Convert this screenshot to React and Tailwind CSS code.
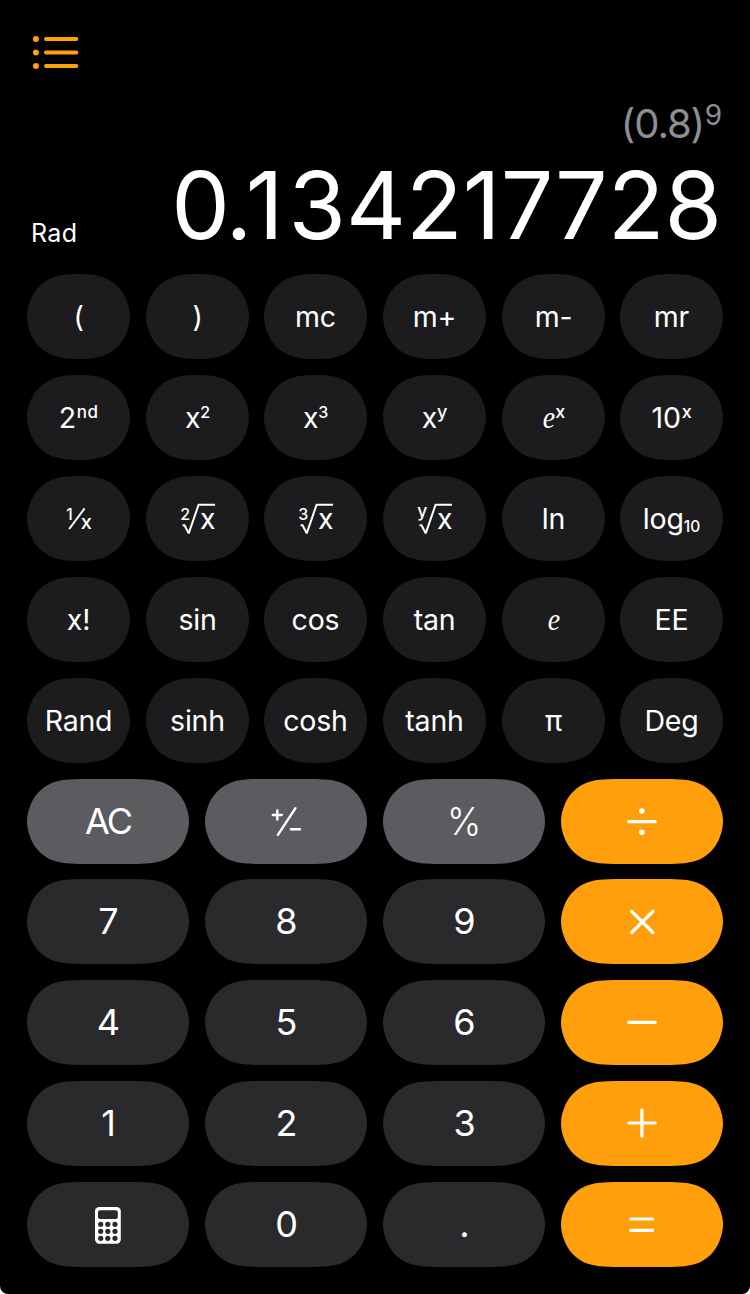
import React from "react";

const SMALL_SHAPE =
  "[clip-path:path('M0_42.5C0_37.5_1_32.5_3.2_26.8C7.2_15.8_15.8_7.2_26.8_3.2C36.9_0_43_0_51.5_0C60_0_66.1_0_76.2_3.2C87.2_7.2_95.8_15.8_99.8_26.8C102_32.5_103_37.5_103_42.5C103_47.5_102_52.5_99.8_58.2C95.8_69.2_87.2_77.8_76.2_81.8C66.1_85_60_85_51.5_85C43_85_36.9_85_26.8_81.8C15.8_77.8_7.2_69.2_3.2_58.2C1_52.5_0_47.5_0_42.5Z')]";
const WIDE_SHAPE =
  "[clip-path:path('M0_42.5C0_37.5_1_32.5_3.2_26.8C7.2_15.8_15.8_7.2_26.8_3.2C36.9_0_46.3_0_65_0L97_0C115.7_0_125.1_0_135.2_3.2C146.2_7.2_154.8_15.8_158.8_26.8C161_32.5_162_37.5_162_42.5C162_47.5_161_52.5_158.8_58.2C154.8_69.2_146.2_77.8_135.2_81.8C125.1_85_115.7_85_97_85L65_85C46.3_85_36.9_85_26.8_81.8C15.8_77.8_7.2_69.2_3.2_58.2C1_52.5_0_47.5_0_42.5Z')]";

const TONES = {
  dark: "bg-[#2a2a2c]",
  gray: "bg-[#5c5b60]",
  orange: "bg-[#ff9f0c]",
};

function SciKey({ children }) {
  return (
    <button
      className={`flex h-[85px] w-[103px] items-center justify-center whitespace-nowrap bg-[#1c1c1e] text-[28.5px] leading-[85px] tracking-[-0.2px] text-white ${SMALL_SHAPE}`}
    >
      {children}
    </button>
  );
}

function WideKey({ tone = "dark", children }) {
  return (
    <button
      className={`flex h-[85px] w-[162px] items-center justify-center text-[36px] leading-[85px] text-white ${TONES[tone]} ${WIDE_SHAPE}`}
    >
      {children}
    </button>
  );
}

const Label = ({ className = "", children }) => <span className={className}>{children}</span>;

const Digit = ({ children }) => <span className="pb-px pl-px">{children}</span>;

const Sup = ({ className = "text-[16px]", children }) => (
  <span className={`inline-block align-[10.5px] font-medium leading-none ${className}`}>{children}</span>
);

const E = () => (
  <span className="inline-block scale-x-90 font-['Liberation_Serif',serif] text-[31px] italic">e</span>
);

function Root({ index, y = 43.7, size = 16 }) {
  return (
    <svg width="103" height="85" viewBox="0 0 103 85" fill="white">
      <path
        d="M36.6 49.6L38.4 49L42.7 57.4L52.6 28.7H69"
        fill="none"
        stroke="white"
        strokeWidth="2"
        strokeLinejoin="bevel"
      />
      <text x="34.2" y={y} fontSize={size} fontWeight="500">{index}</text>
      <text x="54" y="53" fontSize="28.5">x</text>
    </svg>
  );
}

function Reciprocal() {
  return (
    <svg width="103" height="85" viewBox="0 0 103 85" fill="white">
      <text x="39.2" y="43.5" fontSize="15.5" fontWeight="500">1</text>
      <path d="M42.2 53L57.6 32.4" stroke="white" strokeWidth="2" />
      <text x="53.8" y="53" fontSize="20" fontWeight="500">x</text>
    </svg>
  );
}

function Op({ d, width = 3.2, children }) {
  return (
    <svg width="162" height="85" viewBox="0 0 162 85" fill="white">
      <path d={d} fill="none" stroke="white" strokeWidth={width} strokeLinecap="round" />
      {children}
    </svg>
  );
}

function CalculatorIcon() {
  return (
    <svg width="162" height="85" viewBox="0 0 162 85">
      <rect x="68" y="25" width="25.8" height="36.8" rx="4.2" fill="white" />
      <rect x="71" y="28.3" width="19.8" height="8.8" rx="2" fill="#2a2a2c" />
      {[42.3, 49.3, 56.3].map((y) =>
        [73.7, 80.8, 88].map((x) => <circle key={`${x}-${y}`} cx={x} cy={y} r="2.6" fill="#2a2a2c" />)
      )}
    </svg>
  );
}

const SCIENTIFIC = [
  <Label>(</Label>,
  <Label>)</Label>,
  <Label>mc</Label>,
  <Label>m+</Label>,
  <Label>m-</Label>,
  <Label>mr</Label>,
  <Label>2<Sup className="ml-px text-[17px] tracking-[0.4px]">nd</Sup></Label>,
  <Label>x<Sup>2</Sup></Label>,
  <Label>x<Sup>3</Sup></Label>,
  <Label>x<Sup className="text-[18px]">y</Sup></Label>,
  <Label><E /><Sup className="text-[18px]">x</Sup></Label>,
  <Label>10<Sup className="ml-px text-[18px]">x</Sup></Label>,
  <Reciprocal />,
  <Root index="2" />,
  <Root index="3" />,
  <Root index="y" y={40.8} size={17.5} />,
  <Label>ln</Label>,
  <Label>log<span className="inline-block align-[-3px] text-[15.5px] font-medium leading-none tracking-normal">10</span></Label>,
  <Label>x!</Label>,
  <Label>sin</Label>,
  <Label>cos</Label>,
  <Label>tan</Label>,
  <E />,
  <Label>EE</Label>,
  <Label>Rand</Label>,
  <Label>sinh</Label>,
  <Label>cosh</Label>,
  <Label>tanh</Label>,
  <Label>π</Label>,
  <Label>Deg</Label>,
];

export default function App() {
  return (
    <div className="h-[1294px] w-[750px] bg-white">
      <main className="flex h-full flex-col overflow-hidden rounded-b-[8px] bg-black px-[27px] font-[Inter,sans-serif] text-white">
        <header className="flex h-[98px] items-start pl-[5px] pt-[34px]">
          <svg width="48" height="37" viewBox="32 34 48 37" fill="#ff9f0c">
            {[39, 52.5, 66].map((y) => (
              <g key={y}>
                <circle cx="35.9" cy={y} r="3" />
                <rect x="44" y={y - 1.9} width="34.3" height="3.8" rx="1.9" />
              </g>
            ))}
          </svg>
        </header>
        <div className="flex h-[52px] justify-end pr-[1px] text-[40px] leading-[52px] text-[#8e8e93]">
          <span className="tracking-[-1.1px]">(0.8)</span>
          <span className="ml-[0.5px] text-[28px] leading-[34px]">9</span>
        </div>
        <div className="flex h-[124px] items-start justify-between pr-px">
          <span className="pl-[4px] pt-[68px] text-[25px] leading-[30px] tracking-[0.4px]">Rad</span>
          <span className="text-[93px] leading-[111px]">
            <span className="tracking-[-4.5px]">0</span>
            <span className="tracking-[-6.5px]">.</span>
            <span className="tracking-[5px]">1</span>34217728
          </span>
        </div>
        <section className="grid grid-cols-[119px_118px_119px_119px_118px_103px] gap-y-4">
          {SCIENTIFIC.map((key, i) => (
            <SciKey key={i}>{key}</SciKey>
          ))}
        </section>
        <section className="mt-4 grid grid-cols-4 grid-rows-[100px_101px_101px_101px_85px] gap-x-4">
          <WideKey tone="gray"><Label className="pb-px tracking-[-2px]">AC</Label></WideKey>
          <WideKey tone="gray">
            <Op d="M67.8 36H76.8M72.3 31.5V40.5M72.9 55.8L90.5 29.2M85.9 50.3H95" width={2.4} />
          </WideKey>
          <WideKey tone="gray"><Label className="scale-x-[0.95] text-[38.5px] font-light">%</Label></WideKey>
          <WideKey tone="orange">
            <Op d="M67.8 42.7H94.2">
              <circle cx="80.8" cy="32.1" r="2.8" />
              <circle cx="80.8" cy="53.3" r="2.8" />
            </Op>
          </WideKey>
          <WideKey><Digit>7</Digit></WideKey>
          <WideKey><Digit>8</Digit></WideKey>
          <WideKey><Digit>9</Digit></WideKey>
          <WideKey tone="orange"><Op d="M70.7 32.3L91.9 53.5M91.9 32.3L70.7 53.5" /></WideKey>
          <WideKey><Digit>4</Digit></WideKey>
          <WideKey><Digit>5</Digit></WideKey>
          <WideKey><Digit>6</Digit></WideKey>
          <WideKey tone="orange"><Op d="M67.8 42.3H94.2" /></WideKey>
          <WideKey><Digit>1</Digit></WideKey>
          <WideKey><Digit>2</Digit></WideKey>
          <WideKey><Digit>3</Digit></WideKey>
          <WideKey tone="orange"><Op d="M67.8 42H94.2M80.9 28.9V55.2" /></WideKey>
          <WideKey><CalculatorIcon /></WideKey>
          <WideKey><Digit>0</Digit></WideKey>
          <WideKey><Digit>.</Digit></WideKey>
          <WideKey tone="orange"><Op d="M69.8 37H91.5M69.8 48.4H91.5" /></WideKey>
        </section>
      </main>
    </div>
  );
}
